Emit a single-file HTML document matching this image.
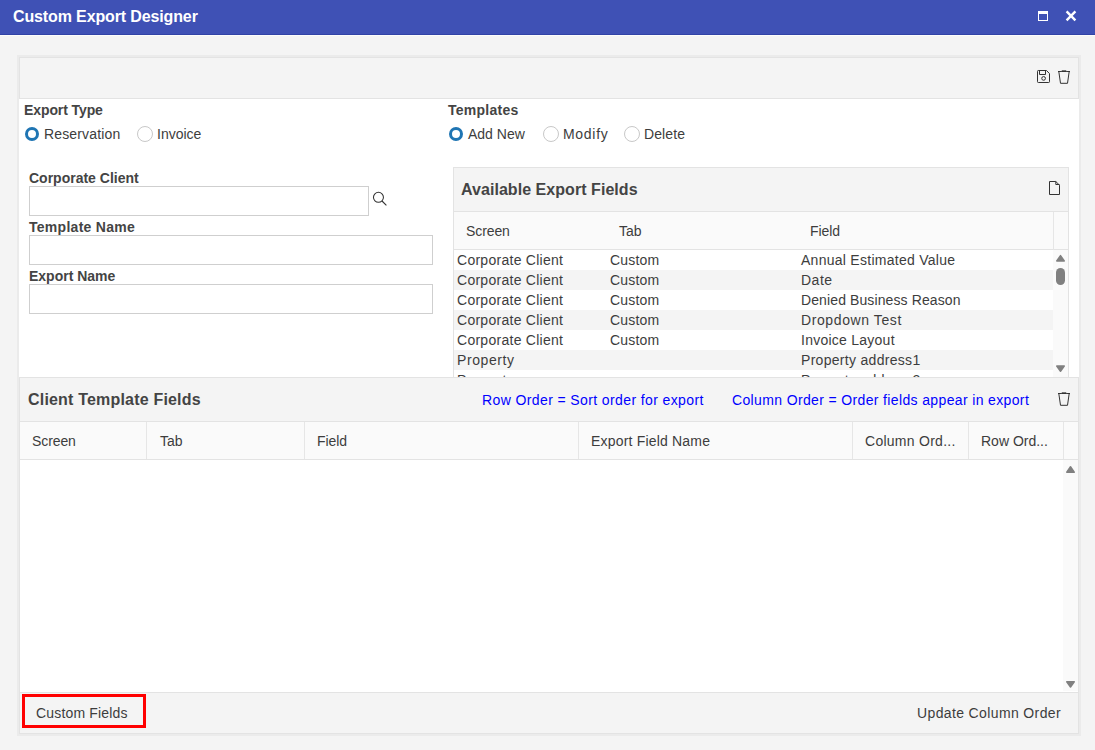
<!DOCTYPE html>
<html><head><meta charset="utf-8">
<style>
*{box-sizing:border-box;margin:0;padding:0}
html,body{width:1095px;height:750px;overflow:hidden;background:#f4f4f4;font-family:"Liberation Sans",sans-serif;color:#333}
.a{position:absolute}
.t{position:absolute;white-space:nowrap;line-height:20px;font-size:14px;color:#3d3d3d}
.b{font-weight:bold;color:#444}
.h16{font-size:16px}
.radio{position:absolute;width:16px;height:16px;border-radius:50%;border:1px solid #c8c8c8;background:#fff}
.radio.on{width:14px;height:14px;border:3.3px solid #1f75b3}
.inp{position:absolute;border:1px solid #cfcfcf;background:#fff}
.blue{color:#0000ff}
.tri-up{position:absolute;width:0;height:0;border-left:4.5px solid transparent;border-right:4.5px solid transparent;border-bottom:7px solid #808080}
.tri-dn{position:absolute;width:0;height:0;border-left:4.5px solid transparent;border-right:4.5px solid transparent;border-top:7px solid #808080}
</style></head><body>
<!-- title bar -->
<div class="a" style="left:0;top:0;width:1095px;height:34px;background:#3f51b5"></div>
<div class="a" style="left:0;top:34px;width:1095px;height:1px;background:#3143a6"></div>
<div class="a" style="left:0;top:35px;width:1095px;height:1px;background:#fcfcfc"></div>
<div class="t b h16" style="left:13px;top:7px;color:#fff;letter-spacing:-0.13px">Custom Export Designer</div>
<div class="a" style="left:1038px;top:11px;width:10px;height:10px;border:1px solid #fff;border-top-width:3px"></div>
<svg class="a" style="left:1064px;top:9px" width="14" height="14" viewBox="0 0 14 14"><path d="M2.6 2.4 L11.4 11.4 M11.4 2.4 L2.6 11.4" stroke="#fff" stroke-width="2.4"/></svg>

<!-- outer frame -->
<div class="a" style="left:17px;top:55px;width:1064px;height:681px;border:2px solid #ebebeb"></div>
<div class="a" style="left:19px;top:57px;width:1060px;height:677px;background:#fff"></div>
<div class="a" style="left:19px;top:57px;width:1060px;height:42px;background:#f4f4f4;border:1px solid #e3e3e3"></div>
<!-- save icon -->
<svg class="a" style="left:1036px;top:69px" width="16" height="16" viewBox="0 0 16 16"><path d="M1.5 2.3 Q1.5 1.5 2.3 1.5 L10.5 1.5 L13.5 4.6 L13.5 12.7 Q13.5 13.5 12.7 13.5 L2.3 13.5 Q1.5 13.5 1.5 12.7 Z" fill="none" stroke="#333" stroke-width="1"/><path d="M3.5 1.5 L3.5 5.5 L9.5 5.5 L9.5 1.5" fill="none" stroke="#333" stroke-width="1"/><circle cx="7.6" cy="9.4" r="1.85" fill="none" stroke="#333" stroke-width="1"/></svg>
<!-- trash icon -->
<svg class="a" style="left:1056px;top:68px" width="16" height="17" viewBox="0 0 16 17"><path d="M2 3.5 H14" fill="none" stroke="#333" stroke-width="1"/><path d="M5.3 3.5 L6 2.5 H10 L10.7 3.5" fill="none" stroke="#666" stroke-width="0.9"/><path d="M2.8 3.5 L4.5 15.3 H11.5 L13.2 3.5" fill="none" stroke="#333" stroke-width="1"/></svg>

<!-- export type -->
<div class="t b" style="left:24px;top:100px;letter-spacing:-0.1px">Export Type</div>
<div class="radio on" style="left:25px;top:127px"></div>
<div class="t" style="left:44px;top:124px;letter-spacing:0.15px">Reservation</div>
<div class="radio" style="left:137px;top:126px"></div>
<div class="t" style="left:157px;top:124px">Invoice</div>

<!-- templates -->
<div class="t b" style="left:448px;top:100px;letter-spacing:0.25px">Templates</div>
<div class="radio on" style="left:449px;top:127px"></div>
<div class="t" style="left:468px;top:124px">Add New</div>
<div class="radio" style="left:543px;top:126px"></div>
<div class="t" style="left:563px;top:124px;letter-spacing:0.7px">Modify</div>
<div class="radio" style="left:624px;top:126px"></div>
<div class="t" style="left:644px;top:124px;letter-spacing:0.1px">Delete</div>

<!-- form -->
<div class="t b" style="left:29px;top:168px">Corporate Client</div>
<div class="inp" style="left:29px;top:186px;width:340px;height:30px"></div>
<svg class="a" style="left:371px;top:190px" width="18" height="18" viewBox="0 0 18 18"><circle cx="7.45" cy="7.3" r="5" fill="none" stroke="#333" stroke-width="1.05"/><path d="M11 11 L15.4 15.4" stroke="#333" stroke-width="1.1"/></svg>
<div class="t b" style="left:29px;top:217px;letter-spacing:0.28px">Template Name</div>
<div class="inp" style="left:29px;top:235px;width:404px;height:30px"></div>
<div class="t b" style="left:29px;top:266px">Export Name</div>
<div class="inp" style="left:29px;top:284px;width:404px;height:30px"></div>

<!-- available export fields -->
<div class="a" style="left:453px;top:167px;width:616px;height:220px;border:1px solid #e3e3e3;background:#fff;overflow:hidden">
  <div class="a" style="left:0;top:0;width:614px;height:44px;background:#f4f4f4;border-bottom:1px solid #e3e3e3"></div>
  <div class="a" style="left:0;top:44px;width:614px;height:38px;background:#fafafa;border-bottom:1px solid #e3e3e3"></div>
  <div class="a" style="left:599px;top:44px;width:1px;height:38px;background:#e6e6e6"></div>
  <div class="a" style="left:599px;top:82px;width:15px;height:140px;background:#fafafa"></div>
  <div class="a" style="left:0;top:102px;width:599px;height:20px;background:#f4f4f4"></div>
  <div class="a" style="left:0;top:142px;width:599px;height:20px;background:#f4f4f4"></div>
  <div class="a" style="left:0;top:182px;width:599px;height:20px;background:#f4f4f4"></div>
</div>
<div class="t b h16" style="left:461px;top:180px;letter-spacing:0.05px">Available Export Fields</div>
<svg class="a" style="left:1047px;top:179px" width="16" height="17" viewBox="0 0 16 17"><path d="M2.5 2.5 H8.8 L12.5 6.2 V15.5 H2.5 Z M8.8 2.5 V5.5 H12.5" fill="none" stroke="#333" stroke-width="1" stroke-linejoin="round"/></svg>
<div class="t" style="left:466px;top:221px;letter-spacing:-0.1px">Screen</div>
<div class="t" style="left:619px;top:221px">Tab</div>
<div class="t" style="left:810px;top:221px;letter-spacing:-0.1px">Field</div>

<div class="t" style="left:457px;top:250px;letter-spacing:0.27px">Corporate Client</div>
<div class="t" style="left:610px;top:250px;letter-spacing:0.2px">Custom</div>
<div class="t" style="left:801px;top:250px;letter-spacing:0.27px">Annual Estimated Value</div>
<div class="t" style="left:457px;top:270px;letter-spacing:0.27px">Corporate Client</div>
<div class="t" style="left:610px;top:270px;letter-spacing:0.2px">Custom</div>
<div class="t" style="left:801px;top:270px;letter-spacing:0.5px">Date</div>
<div class="t" style="left:457px;top:290px;letter-spacing:0.27px">Corporate Client</div>
<div class="t" style="left:610px;top:290px;letter-spacing:0.2px">Custom</div>
<div class="t" style="left:801px;top:290px;letter-spacing:0.11px">Denied Business Reason</div>
<div class="t" style="left:457px;top:310px;letter-spacing:0.27px">Corporate Client</div>
<div class="t" style="left:610px;top:310px;letter-spacing:0.2px">Custom</div>
<div class="t" style="left:801px;top:310px;letter-spacing:0.6px">Dropdown Test</div>
<div class="t" style="left:457px;top:330px;letter-spacing:0.27px">Corporate Client</div>
<div class="t" style="left:610px;top:330px;letter-spacing:0.2px">Custom</div>
<div class="t" style="left:801px;top:330px;letter-spacing:0.25px">Invoice Layout</div>
<div class="t" style="left:457px;top:350px;letter-spacing:0.6px">Property</div>
<div class="t" style="left:801px;top:350px;letter-spacing:0.3px">Property address1</div>
<div class="t" style="left:457px;top:370px;letter-spacing:0.6px">Property</div>
<div class="t" style="left:801px;top:370px;letter-spacing:0.3px">Property address2</div>
<svg class="a" style="left:0;top:0;overflow:visible" width="1" height="1"><polygon points="1056.75,261.0 1064.25,261.0 1060.5,255.6" fill="#808080" stroke="#808080" stroke-width="1.5" stroke-linejoin="round"/></svg>
<div class="a" style="left:1056px;top:268px;width:9px;height:17px;border-radius:4.5px;background:#808080"></div>
<svg class="a" style="left:0;top:0;overflow:visible" width="1" height="1"><polygon points="1056.75,366.0 1064.25,366.0 1060.5,371.2" fill="#808080" stroke="#808080" stroke-width="1.5" stroke-linejoin="round"/></svg>

<!-- client template fields -->
<div class="a" style="left:19px;top:377px;width:1060px;height:357px;border:1px solid #e3e3e3;background:#fff"></div>
<div class="a" style="left:20px;top:378px;width:1058px;height:44px;background:#f4f4f4;border-bottom:1px solid #e3e3e3"></div>
<div class="a" style="left:20px;top:422px;width:1058px;height:38px;background:#fafafa;border-bottom:1px solid #e3e3e3"></div>
<div class="a" style="left:146px;top:422px;width:1px;height:37px;background:#e6e6e6"></div>
<div class="a" style="left:304px;top:422px;width:1px;height:37px;background:#e6e6e6"></div>
<div class="a" style="left:578px;top:422px;width:1px;height:37px;background:#e6e6e6"></div>
<div class="a" style="left:852px;top:422px;width:1px;height:37px;background:#e6e6e6"></div>
<div class="a" style="left:968px;top:422px;width:1px;height:37px;background:#e6e6e6"></div>
<div class="a" style="left:1063px;top:422px;width:1px;height:37px;background:#e6e6e6"></div>
<div class="a" style="left:1063px;top:460px;width:15px;height:231px;background:#fafafa"></div>
<div class="t b h16" style="left:28px;top:390px;letter-spacing:0.19px">Client Template Fields</div>
<div class="t blue" style="left:482px;top:390px;letter-spacing:0.39px">Row Order = Sort order for export</div>
<div class="t blue" style="left:732px;top:390px;letter-spacing:0.36px">Column Order = Order fields appear in export</div>
<svg class="a" style="left:1056px;top:390px" width="16" height="17" viewBox="0 0 16 17"><path d="M2 3.5 H14" fill="none" stroke="#333" stroke-width="1"/><path d="M5.3 3.5 L6 2.5 H10 L10.7 3.5" fill="none" stroke="#666" stroke-width="0.9"/><path d="M2.8 3.5 L4.5 15.3 H11.5 L13.2 3.5" fill="none" stroke="#333" stroke-width="1"/></svg>
<div class="t" style="left:32px;top:431px;letter-spacing:-0.1px">Screen</div>
<div class="t" style="left:160px;top:431px">Tab</div>
<div class="t" style="left:317px;top:431px;letter-spacing:-0.1px">Field</div>
<div class="t" style="left:591px;top:431px;letter-spacing:0.19px">Export Field Name</div>
<div class="t" style="left:865px;top:431px;letter-spacing:0.27px">Column Ord...</div>
<div class="t" style="left:981px;top:431px">Row Ord...</div>
<svg class="a" style="left:0;top:0;overflow:visible" width="1" height="1"><polygon points="1066.75,472.2 1074.25,472.2 1070.5,466.8" fill="#808080" stroke="#808080" stroke-width="1.5" stroke-linejoin="round"/></svg>
<svg class="a" style="left:0;top:0;overflow:visible" width="1" height="1"><polygon points="1066.75,681.8 1074.25,681.8 1070.5,687.0" fill="#808080" stroke="#808080" stroke-width="1.5" stroke-linejoin="round"/></svg>

<!-- footer -->
<div class="a" style="left:20px;top:692px;width:1058px;height:41px;background:#f4f4f4;border-top:1px solid #e3e3e3"></div>
<div class="a" style="left:22px;top:694px;width:124px;height:34px;border:3px solid #ff0000"></div>
<div class="t" style="left:36px;top:703px;letter-spacing:0.17px">Custom Fields</div>
<div class="t" style="left:917px;top:703px;letter-spacing:0.37px">Update Column Order</div>
</body></html>
